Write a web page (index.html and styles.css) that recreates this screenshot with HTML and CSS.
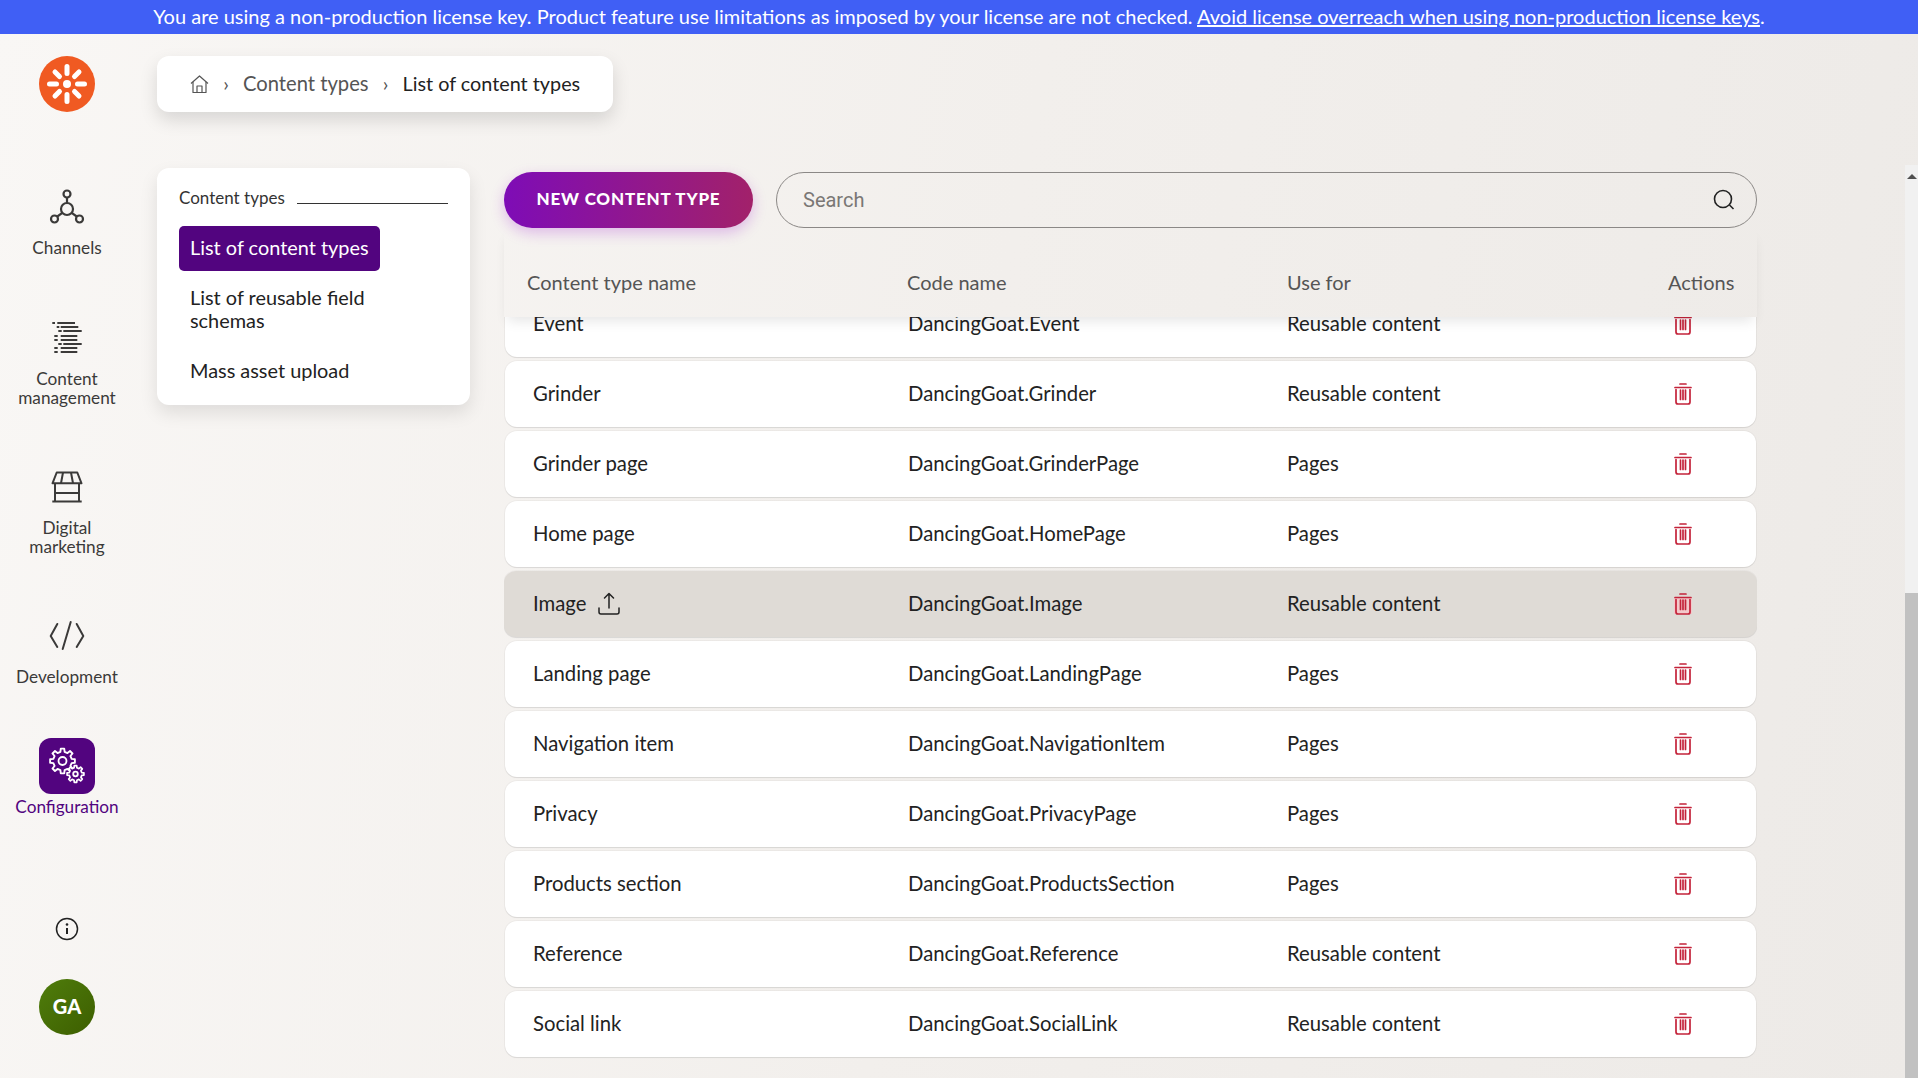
FILE: index.html
```html
<!DOCTYPE html>
<html lang="en">
<head>
    <meta charset="UTF-8">
    <title>List of content types</title>
    <link rel="stylesheet" href="styles.css">
</head>
<body>
    <svg class="defs" width="0" height="0">
        <defs>
            <polygon id="gear" points="7.31,-1.69 9.9,-1.39 9.9,1.39 7.31,1.69 6.36,3.97 7.99,6.02 6.02,7.99 3.97,6.36 1.69,7.31 1.39,9.9 -1.39,9.9 -1.69,7.31 -3.97,6.36 -6.02,7.99 -7.99,6.02 -6.36,3.97 -7.31,1.69 -9.9,1.39 -9.9,-1.39 -7.31,-1.69 -6.36,-3.97 -7.99,-6.02 -6.02,-7.99 -3.97,-6.36 -1.69,-7.31 -1.39,-9.9 1.39,-9.9 1.69,-7.31 3.97,-6.36 6.02,-7.99 7.99,-6.02 6.36,-3.97"/>
            <g id="trash" fill="none" stroke="#c4233a" stroke-width="1.700" stroke-linecap="round" stroke-linejoin="round">
                <path d="M6 1h6"/>
                <path d="M1 4.500h16"/>
                <path d="M2 6.500v12.500a2 2 0 0 0 2 2h10a2 2 0 0 0 2-2V6.500"/>
                <path d="M6.500 7v9.500M9 7v9.500M11.500 7v9.500"/>
            </g>
        </defs>
    </svg>

    <div class="license-bar">
        You are using a non-production license key. Product feature use limitations as imposed by your license are not checked.
        <a href="#">Avoid license overreach when using non-production license keys</a>.
    </div>

    <div class="app">
        <aside class="sidebar">
            <svg class="logo" width="56" height="56" viewBox="0 0 56 56">
                <circle cx="28" cy="28" r="28" fill="#f05a22"/>
                <circle cx="28" cy="28" r="4" fill="#fff"/>
                <g stroke="#fff" stroke-width="5" stroke-linecap="round">
                    <path d="M28 10.500v7M28 38.500v7M10.500 28h7M38.500 28h7"/>
                    <path d="M16 16l4.500 4.500M40 16l-4.500 4.500M16 40l4.500-4.500M40 40l-4.500-4.500"/>
                </g>
            </svg>

            <nav class="side-nav">
                <a class="side-item" href="#">
                    <span class="side-icon">
                        <svg width="36" height="36" viewBox="0 0 36 36" fill="none" stroke="#3b3a39" stroke-width="2.200">
                            <circle cx="18" cy="5" r="3.500"/>
                            <circle cx="18" cy="20" r="6"/>
                            <circle cx="5.500" cy="30" r="3.500"/>
                            <circle cx="30.500" cy="30" r="3.500"/>
                            <path d="M18 8.500V14M13.300 23.800l-5 3.700M22.700 23.800l5 3.700"/>
                        </svg>
                    </span>
                    <span class="side-label">Channels</span>
                </a>
                <a class="side-item" href="#">
                    <span class="side-icon">
                        <svg width="36" height="36" viewBox="0 0 36 36" fill="none" stroke="#3b3a39" stroke-width="1.800">
                            <path d="M3.300 3H6M8.300 3H26"/>
                            <path d="M7.700 7h2.600M11.700 7h17.600"/>
                            <path d="M9.300 11h3.400M14.300 11h18.400"/>
                            <path d="M5.300 16h3.400M11.700 16h16.600"/>
                            <path d="M5.300 20h3.400M11.700 20h16.600"/>
                            <path d="M9.300 24h3.400M14.300 24h18.400"/>
                            <path d="M5.300 28h3.400M11.700 28h16.600"/>
                            <path d="M5.300 32h3.400M11.700 32h16.600"/>
                        </svg>
                    </span>
                    <span class="side-label">Content<br>management</span>
                </a>
                <a class="side-item" href="#">
                    <span class="side-icon">
                        <svg width="36" height="36" viewBox="0 0 36 36" fill="none" stroke="#3b3a39" stroke-width="2" stroke-linejoin="round">
                            <path d="M7.700 3.500h20.600l4.200 10.800H3.500z"/>
                            <path d="M14 3.500l-2 10.800M22 3.500l2 10.800"/>
                            <path d="M6 14.300V32M30 14.300V32M6 24h24M3.300 32.500h29.400"/>
                        </svg>
                    </span>
                    <span class="side-label">Digital<br>marketing</span>
                </a>
                <a class="side-item" href="#">
                    <span class="side-icon">
                        <svg width="36" height="36" viewBox="0 0 36 36" fill="none" stroke="#3b3a39" stroke-width="2" stroke-linecap="round" stroke-linejoin="round">
                            <path d="M8.300 6L1.700 18l6.600 11"/>
                            <path d="M27.700 6l6.600 12-6.600 11"/>
                            <path d="M21.700 4l-8 27"/>
                        </svg>
                    </span>
                    <span class="side-label">Development</span>
                </a>
                <a class="side-item side-item-active" href="#">
                    <span class="side-icon">
                        <svg width="56" height="56" viewBox="0 0 56 56" fill="none" stroke="#fff" stroke-linejoin="round">
                            <use href="#gear" transform="translate(23.500 23) scale(1.250)" stroke-width="1.500"/>
                            <circle cx="23.500" cy="23" r="4" stroke-width="1.800"/>
                            <use href="#gear" transform="translate(36.500 36) scale(.85)" fill="#52047f" stroke-width="2"/>
                            <circle cx="36.500" cy="36" r="2.300" stroke-width="1.800"/>
                        </svg>
                    </span>
                    <span class="side-label">Configuration</span>
                </a>
            </nav>

            <div class="side-bottom">
                <svg width="24" height="24" viewBox="0 0 24 24" fill="none" stroke="#222">
                    <circle cx="12" cy="12" r="10.500" stroke-width="1.500"/>
                    <path d="M12 11v6" stroke-width="2"/>
                    <circle cx="12" cy="7.500" r="1.300" fill="#222" stroke="none"/>
                </svg>
                <div class="avatar">GA</div>
            </div>
        </aside>

        <main class="content">
            <div class="breadcrumbs">
                <svg width="19" height="18" viewBox="0 0 19 18" fill="none" stroke="#555" stroke-width="1.200" stroke-linejoin="round">
                    <path d="M1 8.500L9.500 1 18 8.500"/>
                    <path d="M3 7v10.500h13V7"/>
                    <path d="M7 17.500V11h5v6.500"/>
                </svg>
                <span class="crumb-sep">›</span>
                <a class="crumb" href="#">Content types</a>
                <span class="crumb-sep">›</span>
                <span class="crumb-current">List of content types</span>
            </div>

            <div class="columns">
                <section class="menu-card">
                    <div class="menu-title"><span>Content types</span><i class="menu-line"></i></div>
                    <a class="menu-item menu-item-active" href="#">List of content types</a>
                    <a class="menu-item" href="#">List of reusable field schemas</a>
                    <a class="menu-item" href="#">Mass asset upload</a>
                </section>

                <section class="listing">
                    <div class="toolbar">
                        <button class="new-btn">NEW CONTENT TYPE</button>
                        <div class="search">
                            <span class="search-text">Search</span>
                            <svg width="22" height="22" viewBox="0 0 22 22" fill="none" stroke="#222" stroke-width="1.600">
                                <circle cx="10" cy="10" r="8.500"/>
                                <path d="M16.500 16l4 4"/>
                            </svg>
                        </div>
                    </div>

                    <div class="table-head">
                        <span>Content type name</span>
                        <span>Code name</span>
                        <span>Use for</span>
                        <span>Actions</span>
                    </div>

                    <div class="table-scroll">
                        <div class="table-rows">
                            <div class="row">
                                <span>Event</span><span>DancingGoat.Event</span><span>Reusable content</span>
                                <svg class="trash" width="18" height="22" viewBox="0 0 18 22"><use href="#trash"/></svg>
                            </div>
                            <div class="row">
                                <span>Grinder</span><span>DancingGoat.Grinder</span><span>Reusable content</span>
                                <svg class="trash" width="18" height="22" viewBox="0 0 18 22"><use href="#trash"/></svg>
                            </div>
                            <div class="row">
                                <span>Grinder page</span><span>DancingGoat.GrinderPage</span><span>Pages</span>
                                <svg class="trash" width="18" height="22" viewBox="0 0 18 22"><use href="#trash"/></svg>
                            </div>
                            <div class="row">
                                <span>Home page</span><span>DancingGoat.HomePage</span><span>Pages</span>
                                <svg class="trash" width="18" height="22" viewBox="0 0 18 22"><use href="#trash"/></svg>
                            </div>
                            <div class="row row-hover">
                                <span class="row-name">Image
                                    <svg width="22" height="23" viewBox="0 0 22 23" fill="none" stroke="#222" stroke-width="1.500" stroke-linecap="round" stroke-linejoin="round">
                                        <path d="M11 16V2M6.500 6L11 1.500 15.500 6"/>
                                        <path d="M1 16v4a2 2 0 0 0 2 2h16a2 2 0 0 0 2-2v-4"/>
                                    </svg>
                                </span>
                                <span>DancingGoat.Image</span><span>Reusable content</span>
                                <svg class="trash trash-hover" width="18" height="22" viewBox="0 0 18 22"><use href="#trash"/></svg>
                            </div>
                            <div class="row">
                                <span>Landing page</span><span>DancingGoat.LandingPage</span><span>Pages</span>
                                <svg class="trash" width="18" height="22" viewBox="0 0 18 22"><use href="#trash"/></svg>
                            </div>
                            <div class="row">
                                <span>Navigation item</span><span>DancingGoat.NavigationItem</span><span>Pages</span>
                                <svg class="trash" width="18" height="22" viewBox="0 0 18 22"><use href="#trash"/></svg>
                            </div>
                            <div class="row">
                                <span>Privacy</span><span>DancingGoat.PrivacyPage</span><span>Pages</span>
                                <svg class="trash" width="18" height="22" viewBox="0 0 18 22"><use href="#trash"/></svg>
                            </div>
                            <div class="row">
                                <span>Products section</span><span>DancingGoat.ProductsSection</span><span>Pages</span>
                                <svg class="trash" width="18" height="22" viewBox="0 0 18 22"><use href="#trash"/></svg>
                            </div>
                            <div class="row">
                                <span>Reference</span><span>DancingGoat.Reference</span><span>Reusable content</span>
                                <svg class="trash" width="18" height="22" viewBox="0 0 18 22"><use href="#trash"/></svg>
                            </div>
                            <div class="row">
                                <span>Social link</span><span>DancingGoat.SocialLink</span><span>Reusable content</span>
                                <svg class="trash" width="18" height="22" viewBox="0 0 18 22"><use href="#trash"/></svg>
                            </div>
                        </div>
                    </div>
                </section>
            </div>
        </main>

        <div class="scrollbar">
            <span class="scroll-arrow"></span>
            <span class="scroll-thumb"></span>
        </div>
    </div>
</body>
</html>
```

FILE: styles.css
```css
:root {
    --page-bg: linear-gradient(100deg, #f9f7f5 0%, #f2efec 50%, #edeae7 100%);
}

* {
    box-sizing: border-box;
}

html, body {
    height: 100%;
}

body {
    margin: 0;
    display: flex;
    flex-direction: column;
    overflow: hidden;
    font-family: "Lato", "Liberation Sans", sans-serif;
    color: #222;
    background: var(--page-bg);
}

a {
    color: inherit;
    text-decoration: none;
}

.defs {
    position: absolute;
}

.license-bar {
    height: 34px;
    flex: none;
    background: #405ff5;
    color: #fff;
    font-size: 20px;
    line-height: 33px;
    text-align: center;
    white-space: nowrap;
}

.license-bar a {
    text-decoration: underline;
}

.app {
    flex: 1;
    min-height: 0;
    display: flex;
}

/* левая панель */
.sidebar {
    width: 134px;
    flex: none;
    display: flex;
    flex-direction: column;
    align-items: center;
    padding: 22px 0 43px;
}

.logo {
    flex: none;
}

.side-nav {
    margin-top: 67px;
    display: flex;
    flex-direction: column;
    gap: 52px;
    align-items: center;
}

.side-item {
    display: flex;
    flex-direction: column;
    align-items: center;
    color: #3b3a39;
}

.side-item:first-child {
    margin-bottom: 1px;
}

.side-icon {
    width: 56px;
    height: 56px;
    display: flex;
    align-items: center;
    justify-content: center;
    border-radius: 12px;
}

.side-label {
    margin-top: 3px;
    font-size: 17.200px;
    line-height: 19px;
    text-align: center;
    white-space: nowrap;
}

.side-item-active {
    color: #52047f;
}

.side-item-active .side-icon {
    background: #52047f;
}

.side-bottom {
    margin-top: auto;
    display: flex;
    flex-direction: column;
    align-items: center;
    gap: 38px;
}

.avatar {
    width: 56px;
    height: 56px;
    border-radius: 50%;
    background: linear-gradient(135deg, #4f7d0c, #3d5e00);
    color: #fff;
    font-size: 20px;
    font-weight: 900;
    line-height: 54px;
    text-align: center;
}

/* основная часть */
.content {
    flex: 1;
    min-width: 0;
    padding: 22px 148px 0 23px;
    display: flex;
    flex-direction: column;
}

.breadcrumbs {
    align-self: flex-start;
    height: 56px;
    display: flex;
    align-items: center;
    padding: 0 33px;
    background: #fff;
    border-radius: 12px;
    box-shadow: 0 8px 18px rgba(0,0,0,0.13);
    font-size: 20.200px;
    white-space: nowrap;
}

.crumb {
    color: #555;
    margin-bottom: 3px;
}

.crumb-sep {
    width: 34px;
    text-align: center;
    color: #555;
    font-size: 20px;
    margin-bottom: 3px;
}

.crumb-current {
    color: #222;
    font-size: 19.800px;
    margin-bottom: 3px;
}

.columns {
    flex: 1;
    min-height: 0;
    margin-top: 56px;
    display: flex;
    gap: 34px;
}

.menu-card {
    width: 313px;
    height: 237px;
    flex: none;
    display: flex;
    flex-direction: column;
    gap: 5px;
    padding: 20px 22px 11px;
    background: #fff;
    border-radius: 12px;
    box-shadow: 0 8px 18px rgba(0,0,0,0.1);
}

.menu-title {
    height: 20px;
    margin-bottom: 13px;
    padding-bottom: 2px;
    display: flex;
    align-items: center;
    gap: 12px;
    font-size: 17px;
    color: #333;
}

.menu-line {
    flex: 1;
    height: 1px;
    margin-top: 13px;
    background: #333;
}

.menu-item {
    align-self: flex-start;
    max-width: 232px;
    padding: 10px 11px 12px;
    border-radius: 5px;
    font-size: 19.900px;
    line-height: 23px;
}

.menu-item-active {
    background: #52047f;
    color: #fff;
}

.listing {
    flex: 1;
    min-width: 0;
    padding-top: 4px;
    display: flex;
    flex-direction: column;
}

.toolbar {
    position: relative;
    z-index: 2;
    height: 56px;
    flex: none;
    display: flex;
    gap: 23px;
}

.new-btn {
    width: 249px;
    flex: none;
    padding-bottom: 4px;
    border: none;
    border-radius: 28px;
    background: linear-gradient(90deg, #7e0cb6, #a2216a);
    color: #fff;
    font-family: inherit;
    font-size: 17px;
    font-weight: 900;
    letter-spacing: 0.8px;
    box-shadow: 0 5px 14px rgba(160,40,210,0.28);
}

.search {
    flex: 1;
    display: flex;
    align-items: center;
    justify-content: space-between;
    padding: 0 21px 0 26px;
    border: 1px solid #8b8886;
    border-radius: 28px;
}

.search-text {
    font-family: "Roboto", sans-serif;
    font-size: 20px;
    color: #7a7775;
}

.table-head {
    position: relative;
    z-index: 1;
    height: 89px;
    flex: none;
    display: grid;
    grid-template-columns: 380px 380px 381px auto;
    align-items: end;
    padding: 0 0 23px 23px;
    font-size: 20px;
    color: #555;
    background: var(--page-bg) fixed;
    box-shadow: 0 8px 12px -4px rgba(0,0,0,0.1);
}

.table-scroll {
    flex: 1;
    min-height: 0;
    overflow: hidden;
}

.table-rows {
    margin-top: -26px;
    display: flex;
    flex-direction: column;
    gap: 4px;
}

.row {
    height: 66px;
    margin: 0 1px;
    display: grid;
    grid-template-columns: 375px 379px 387px auto;
    align-items: center;
    padding-left: 28px;
    background: #fff;
    border-radius: 12px;
    box-shadow: 0 0 0 1px rgba(0,0,0,0.03), 0 1px 1px rgba(0,0,0,0.08);
    font-size: 20.300px;
    color: #222;
}

.row > span {
    padding-bottom: 2px;
}

.row-hover {
    background: #dfdbd6;
    margin: 0;
    padding-left: 29px;
}

.row-name {
    display: flex;
    align-items: center;
    gap: 12px;
}

.trash-hover {
    background: linear-gradient(#dfdbd6 25%, #f3c9cb 25%, #f3c9cb 95%, #dfdbd6 95%);
}

.scrollbar {
    width: 13px;
    flex: none;
    margin-top: 131px;
    display: flex;
    flex-direction: column;
    background: #f1f1f1;
}

.scroll-arrow {
    width: 0;
    height: 0;
    margin: 9px auto 0;
    border-left: 5px solid transparent;
    border-right: 5px solid transparent;
    border-bottom: 5px solid #505050;
}

.scroll-thumb {
    margin-top: auto;
    height: 485px;
    background: #c1c1c1;
}
```
